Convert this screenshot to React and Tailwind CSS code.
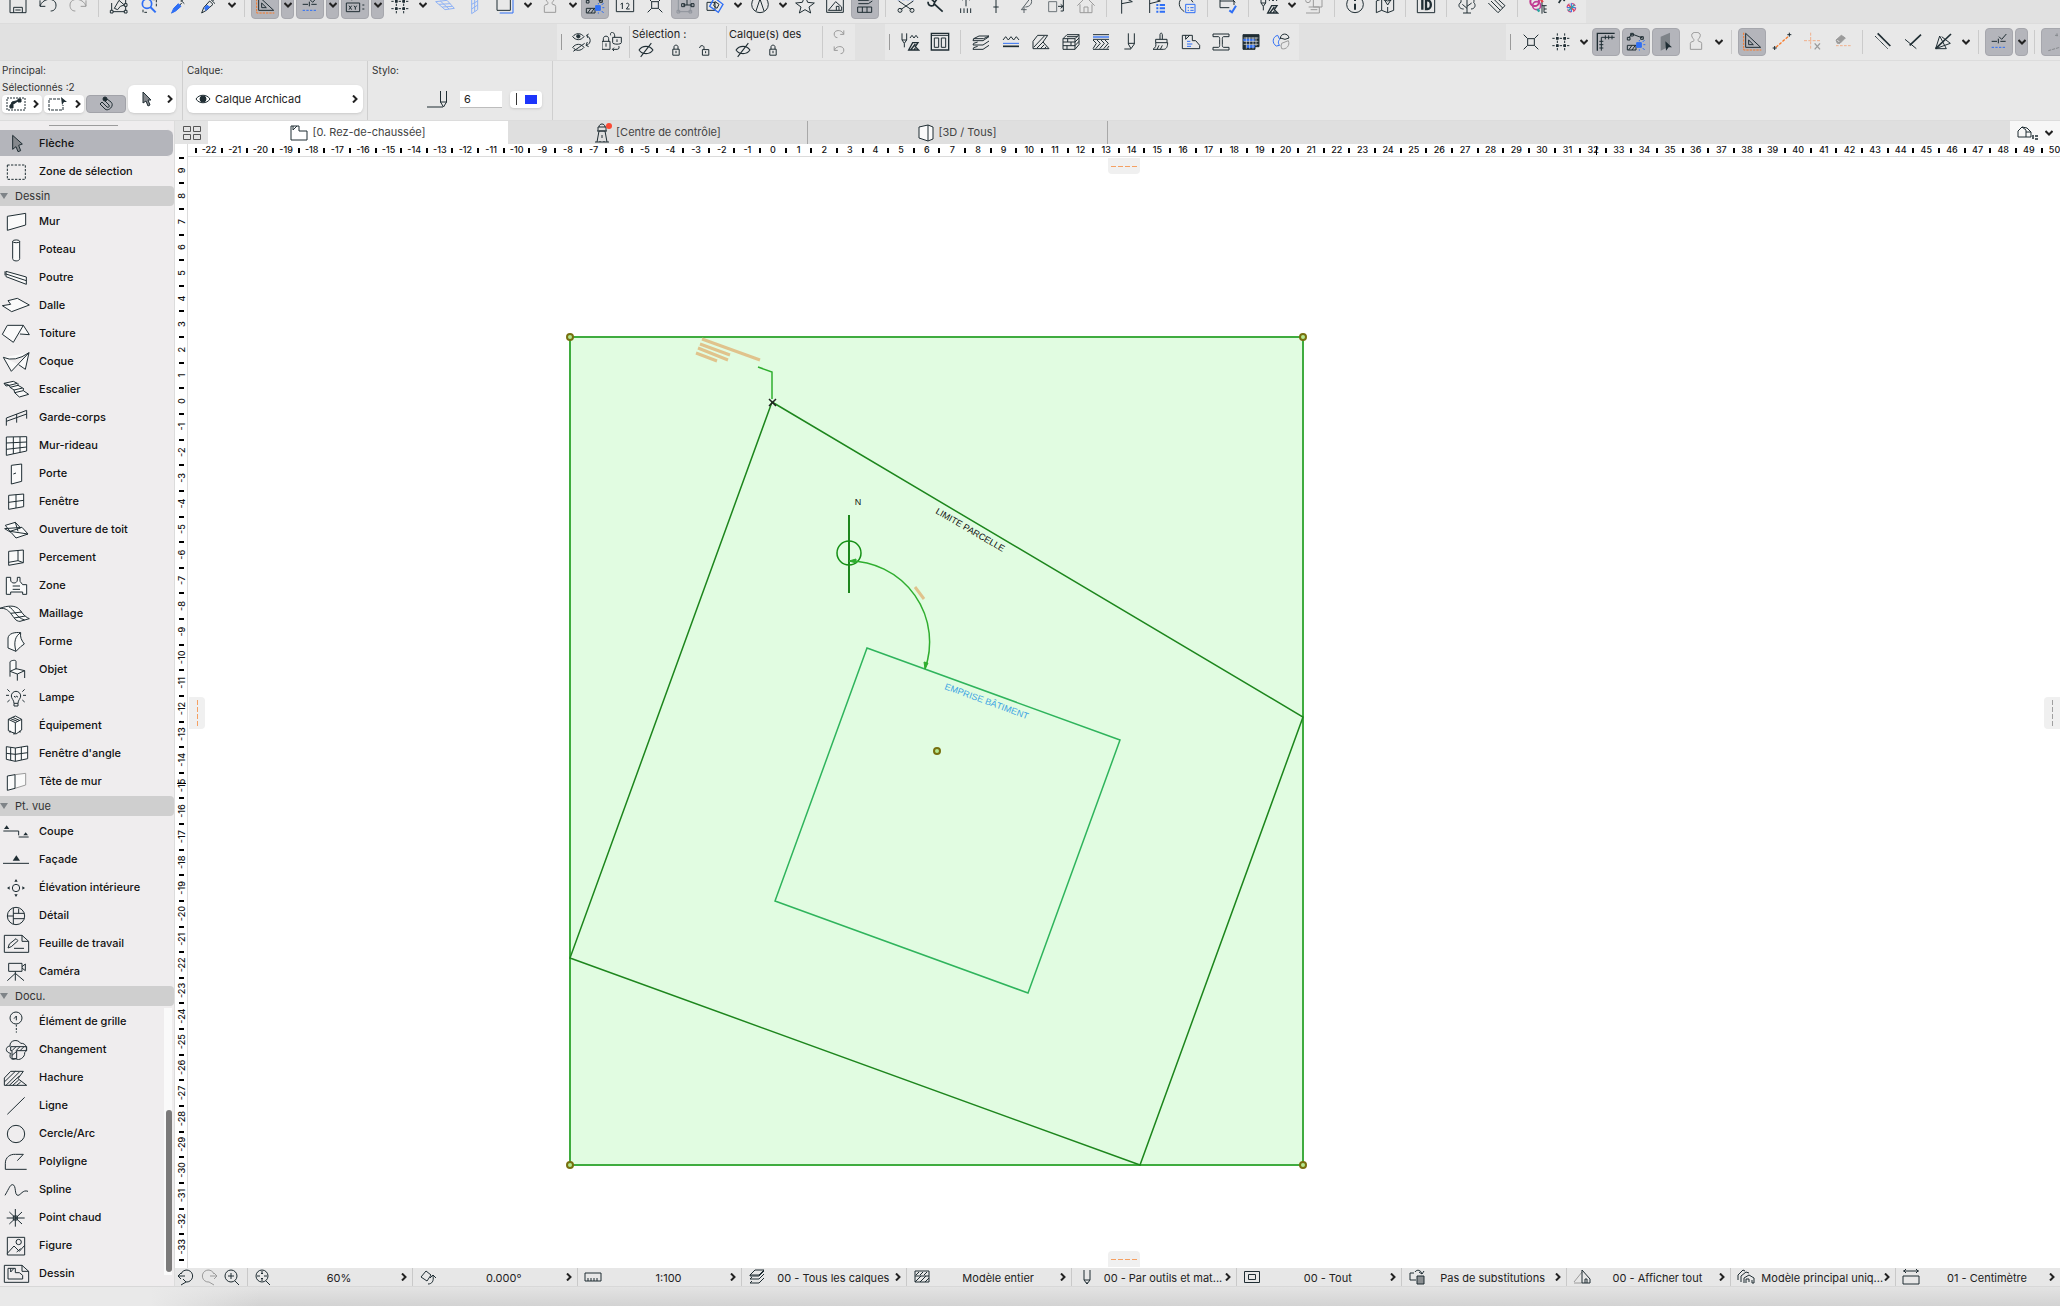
import { clsx } from 'clsx';

const INK = '#1f2d33';
const BLUE = '#2f6ff5';
const ORANGE = '#fb7a28';
const GREY = '#9b9b9b';

// Toolbar icons, drawn on a 60 x 60 grid
const icons = {
  save: <path d="M6 6H46L54 14V53H6ZM17 53V37H43V53M22 45H38" />,
  undo: <path d="M6 16V34H22M6 33C16 6 54 8 54 30C54 42 48 48 38 48" />,
  redo: <path d="M54 16V34H38M54 33C44 6 6 8 6 30C6 42 12 48 22 48" stroke={GREY} />,
  editSel: (
    <>
      <path d="M8 24V50H50V14" />
      <path d="M16 40L30 16L46 30L34 34L26 44Z" />
      <path d="M4 46h8v8h-8zM46 46h8v8h-8zM46 26h8v8h-8z" fill="#e8e8e8" />
    </>
  ),
  findSel: (
    <>
      <circle cx="24" cy="26" r="14" stroke={BLUE} strokeWidth="5" />
      <path d="M34 36L50 52" stroke={BLUE} strokeWidth="6" />
      <path d="M40 14H52V34M12 44V52H24" strokeDasharray="8 4" />
    </>
  ),
  pipette: (
    <>
      <path d="M36 20L52 4M34 14L46 26M38 24L18 46L8 54" />
      <path d="M8 54L14 40L28 26L36 34L20 48Z" fill={BLUE} stroke={BLUE} />
    </>
  ),
  syringe: (
    <>
      <path d="M34 12L48 26M41 18L54 4M32 18L42 28L22 46L8 54L14 38Z" />
      <path d="M17 38L24 31L32 36L20 46Z" fill={BLUE} stroke={BLUE} />
    </>
  ),
  guide: (
    <>
      <path d="M5 2V54H58" stroke={ORANGE} strokeDasharray="7 3" />
      <path d="M11 4V46H56ZM20 24V38H34Z" />
    </>
  ),
  snapGuide: (
    <>
      <path d="M8 28H24M34 28H50M28 20V34M30 14L38 22L52 6" />
      <path d="M8 46H52" stroke={BLUE} strokeDasharray="7 4" />
    </>
  ),
  coords: (
    <>
      <path d="M4 24H44V50H4ZM8 12L14 6L20 16M52 30H58M52 42H58" />
      <path d="M12 32L20 44M20 32L12 44M27 32L31 38L35 32M31 38V44" strokeWidth="3" />
    </>
  ),
  grid: (
    <>
      <path d="M19 4V56M41 4V56M4 19H56M4 41H56" strokeDasharray="7 4" />
      <path d="M15 15h8v8h-8zM37 15h8v8h-8zM15 37h8v8h-8zM37 37h8v8h-8z" fill={INK} stroke="none" />
    </>
  ),
  plane: (
    <path d="M2 20L36 16L58 40L30 44ZM12 28L46 26M22 36L52 34M16 18L42 42" stroke="#8fb2f5" strokeWidth="3" />
  ),
  vplane: <path d="M20 14L38 4V44L20 56ZM29 10V50M20 28L38 18M20 42L38 30" stroke="#8fb2f5" strokeWidth="3" />,
  copies: (
    <>
      <path d="M14 54H54V14" stroke={BLUE} />
      <path d="M6 4H46V46H6Z" />
    </>
  ),
  stamp: (
    <path d="M13 52V34C13 28 22 30 24 26C26 22 17 18 17 10C17 4 22 1 30 1S43 4 43 10C43 18 34 22 36 26C38 30 47 28 47 34V52Z" stroke={GREY} />
  ),
  nodes: (
    <>
      <path d="M8 18L18 6L50 18M14 4h8v8h-8zM4 16h8v8h-8zM44 14h8v8h-8z" />
      <path d="M4 40H30V54H4ZM8 54L18 40M18 54L28 40" strokeWidth="3" />
      <path d="M32 32H46V46H32Z" fill={BLUE} stroke={BLUE} />
      <path d="M50 30L56 24M52 38H58M50 48L56 54M40 52V56M40 28V24" stroke={BLUE} strokeWidth="3" />
    </>
  ),
  ruler12: (
    <>
      <path d="M4 4V50H56V4M14 4V12M24 4V12M34 4V12M44 4V12" />
      <path d="M17 28L22 24V42M34 26C40 22 44 28 40 34L34 42H44" />
    </>
  ),
  hotspot: <path d="M20 20H40V40H20ZM20 20L8 8M40 20L52 8M20 40L8 52M40 40L52 52" />,
  suspend: (
    <>
      <path d="M10 8H46V50H10Z" stroke="#8f949c" />
      <path d="M6 46h8v8h-8zM42 46h8v8h-8z" stroke="#8f949c" />
      <path d="M24 30H52M20 26h9v9h-9zM48 26h9v9h-9zM36 10V30" />
    </>
  ),
  morph: (
    <>
      <path d="M6 22H30V46H6Z" />
      <path d="M28 8L54 28L40 52L14 34Z" stroke={BLUE} strokeWidth="4" />
      <path d="M30 20L42 28L36 40L26 32Z" />
    </>
  ),
  compass: (
    <>
      <circle cx="30" cy="28" r="25" />
      <path d="M18 48L30 12L42 48" />
    </>
  ),
  star: <path d="M30 2L38 22L58 24L42 36L47 54L30 44L13 54L18 36L2 24L22 22Z" />,
  drawing: (
    <>
      <path d="M5 4H55V52H5Z" />
      <path d="M10 46L32 20L50 36V46ZM34 46V34H42V46" />
    </>
  ),
  layersFill: (
    <>
      <path d="M10 16L20 10H50L40 16ZM10 26H40L52 18" />
      <path d="M8 36H50V52H8ZM22 36V52M36 36V52" />
    </>
  ),
  cut: (
    <>
      <path d="M4 14H56" stroke={BLUE} strokeDasharray="8 6" />
      <path d="M8 18L46 44M52 18L14 44" />
      <circle cx="12" cy="46" r="6" />
      <circle cx="48" cy="46" r="6" />
    </>
  ),
  tool: <path d="M6 20C6 34 20 36 26 28L50 50M14 10L26 22L36 8M26 22L22 32" strokeWidth="5" />,
  upBars: <path d="M30 34V6M20 16L30 6L40 16M14 40V54M24 40V54M34 40V54M44 40V54" />,
  vline: <path d="M22 36H38M30 4V54" />,
  feather: <path d="M24 54V34L44 8C52 24 42 36 28 36M24 34L16 44H32" stroke="#5a6368" />,
  export: (
    <>
      <path d="M8 20H32V50H8Z" stroke="#6b7378" />
      <path d="M24 8H52V48H44M36 34H50M44 28L51 34L44 40" />
    </>
  ),
  home: <path d="M4 32L30 6L56 32M12 28V53H48V28M24 53V36H36V53" stroke={GREY} />,
  flag: <path d="M14 56V4L46 20L14 26" />,
  flagList: (
    <>
      <path d="M8 54V6L40 18L8 26" />
      <path d="M28 30H34M38 30H54M28 40H34M38 40H54M28 50H34M38 50H54" stroke={BLUE} strokeWidth="6" />
    </>
  ),
  issue: (
    <>
      <path d="M22 50C4 38 2 20 16 8H38L48 22" />
      <path d="M26 28H54V53H26ZM32 38H36M40 38H50M32 46H36M40 46H50" stroke={BLUE} />
    </>
  ),
  check: (
    <>
      <path d="M6 8V38H34M6 18H48V30M40 10L52 22" />
      <path d="M34 46L42 52L54 32" stroke={BLUE} strokeWidth="6" />
    </>
  ),
  penSet: (
    <>
      <path d="M6 4V24L13 34L20 24V4M6 24H20M13 34V46" />
      <path d="M30 18L36 10L42 18L48 10L54 18" strokeWidth="3" />
      <path d="M26 54L38 32H54L46 44L56 54ZM32 54L46 36M42 54L46 48" strokeWidth="4" />
    </>
  ),
  docs: (
    <>
      <circle cx="12" cy="16" r="7" stroke={GREY} />
      <path d="M28 8H54V36H28ZM14 36H46V54H6M20 44H40" stroke={GREY} />
    </>
  ),
  info: (
    <>
      <circle cx="30" cy="28" r="25" />
      <path d="M30 26V44M30 14V18" strokeWidth="6" />
    </>
  ),
  map: <path d="M4 18L20 12L38 18L56 12V46L38 53L20 46L4 53ZM20 12V46M38 36V53M38 30L28 14A10 10 0 0 1 48 14Z" fill="#e8e8e8" />,
  id: (
    <>
      <path d="M4 4H56V53H4Z" />
      <path d="M19 14V44M30 16V42H34C48 42 48 16 34 16Z" strokeWidth="7" />
    </>
  ),
  tree: <path d="M30 54V14M18 54H42M30 40L16 28M30 34L44 24M20 42C4 42 2 26 12 22C10 8 26 2 32 8C46 2 54 14 50 22C58 30 54 42 42 42" />,
  hatchBlock: <path d="M4 24L32 52M12 18L40 46M20 12L48 40M28 8L54 32M54 32L32 54" />,
  swirl: (
    <>
      <circle cx="20" cy="20" r="13" stroke="#c2378e" strokeWidth="6" />
      <circle cx="26" cy="32" r="12" stroke="#c0409a" strokeWidth="5" />
      <path d="M34 4L44 22" stroke="#e3454d" strokeWidth="7" />
      <path d="M28 42L34 50" stroke="#2ba6a0" strokeWidth="7" />
      <path d="M42 22V56M42 32H56M48 32V52H56M48 42H56" />
    </>
  ),
  orb: (
    <>
      <path d="M2 24L14 6M10 4L20 18" strokeWidth="5" />
      <circle cx="40" cy="38" r="13" stroke="#c94b8b" strokeWidth="4" strokeDasharray="14 6" />
      <path d="M40 25V51M27 38H53" stroke="#3f7de0" strokeWidth="4" />
      <path d="M31 29L49 47" stroke="#e3454d" strokeWidth="4" />
      <path d="M49 29L31 47" stroke="#2ba6a0" strokeWidth="4" />
    </>
  ),
  eyeSwap: (
    <>
      <path d="M2 14C12 2 26 2 36 14C26 26 12 26 2 14ZM2 46C12 34 26 34 36 46C26 58 12 58 2 46ZM4 58L38 34" />
      <circle cx="19" cy="13" r="5" fill={INK} />
      <path d="M44 10C58 18 58 34 44 40M42 40L50 44M42 40L46 30M44 10L50 6M44 10L48 18" />
    </>
  ),
  lockSwap: (
    <>
      <path d="M0 28H24V52H0ZM4 28V20C4 10 20 10 20 20V28M12 34V44M32 16H58V32C58 38 32 38 32 32ZM45 22V30M38 16C40-4 22-2 26 10" />
      <path d="M32 52H46C52 52 52 44 50 42M36 47L31 52L36 57" />
    </>
  ),
  panels: (
    <>
      <path d="M4 4H56V54H4Z" strokeWidth="4" />
      <path d="M4 10H56M13 18H26V46H13ZM34 18H47V46H34Z" />
    </>
  ),
  layers: (
    <path d="M8 20L24 12H54L38 20ZM8 20L6 26H36L54 14M8 34L6 39H36L54 27M8 34L20 30M8 47L6 52H36L54 40M8 47L20 43" />
  ),
  lineTypes: (
    <>
      <path d="M6 24L14 14L22 24L30 14L38 24L46 14L54 24" />
      <path d="M6 34H54" stroke={BLUE} />
      <path d="M6 43H54" strokeWidth="5" />
    </>
  ),
  hatch: <path d="M6 50V28L20 10H50L36 30L54 50ZM8 46L40 12M18 48L38 28M28 50L40 38M40 50L46 44" />,
  brick: (
    <path d="M6 20L18 8H54V38L42 52H6ZM6 20H42V52M42 20L54 8M6 30H42M6 41H42M20 20V30M30 30V41M18 41V52M42 30L54 18M42 41L54 28M18 14H50" />
  ),
  composite: (
    <>
      <path d="M6 8H54M6 22H54M6 52H54" />
      <path d="M6 15H54" stroke={BLUE} strokeWidth="4" />
      <path d="M6 24L16 34L6 50M18 24L28 34L14 50M30 24L40 34L26 50M42 24L52 34L38 50M54 42L48 50" />
    </>
  ),
  pen: <path d="M22 4V36L30 50L40 36V4M22 34H40M10 51H30" />,
  brush: <path d="M27 22V8C27 2 34 2 34 8V22M14 32V22H48V32M14 32H50C50 44 46 52 38 52H6C14 46 16 42 14 32ZM18 52L24 40M28 52L34 40" />,
  zoneCat: (
    <>
      <path d="M4 10H34V26H44L56 40V50H4ZM14 10V22L26 10" />
      <path d="M18 28H28M18 36H34M18 43H30" stroke={BLUE} />
    </>
  ),
  beam: <path d="M6 6H54V14H38C34 14 34 18 34 22V38C34 42 34 46 38 46H54V54H6V46H22C26 46 26 42 26 38V22C26 18 26 14 22 14H6Z" />,
  schedule: (
    <>
      <path d="M6 8H54V44H42V52H6Z" fill={INK} />
      <path d="M8 22H40V26H8ZM18 40H40V46H18Z" fill={BLUE} stroke={BLUE} />
      <path d="M16 16V50M26 16V50M36 16V50M45 16V42M8 18H52M8 28H52M8 37H52" stroke="#e8e8e8" strokeWidth="2" />
    </>
  ),
  fan: (
    <>
      <path d="M20 10C4 14 2 34 16 42L26 40C20 34 22 26 26 22Z" stroke={BLUE} />
      <path d="M28 20C28 2 52 2 54 18L42 22L28 18Z" />
      <path d="M32 34L52 26C58 40 46 54 32 50L30 42Z" stroke={GREY} />
    </>
  ),
  rulers: (
    <>
      <path d="M4 56V4H56" strokeWidth="4" />
      <path d="M16 56V16H56M28 22V10M38 22V10M48 22V10M10 28H22M10 38H22M10 48H22" />
    </>
  ),
  cursorPlane: (
    <>
      <path d="M14 14L42 2V42L14 56Z" fill="#7e8388" stroke="none" />
      <path d="M28 28L48 46H38L30 56Z" fill={INK} stroke="none" />
    </>
  ),
  guideLine: (
    <>
      <path d="M12 46L48 14" stroke={ORANGE} strokeWidth="4" strokeDasharray="9 4" />
      <path d="M2 48H14M8 42V54M46 8H58M52 2V14" />
    </>
  ),
  guideDel: (
    <>
      <path d="M26 2V54M6 26H54" stroke="#f0b08c" strokeDasharray="9 4" />
      <path d="M38 34L54 52M54 34L38 52" stroke={GREY} strokeWidth="4" />
    </>
  ),
  eraser: (
    <>
      <path d="M12 24L28 10L40 18L24 34H16Z" fill={GREY} stroke={GREY} />
      <path d="M16 24L22 30" stroke="#e8e8e8" />
      <path d="M12 41H56" stroke="#f0b08c" strokeDasharray="8 4" />
    </>
  ),
  parallel: (
    <>
      <path d="M14 4L52 42" strokeWidth="5" />
      <path d="M6 12L44 50" strokeDasharray="4 1" />
    </>
  ),
  perp: (
    <>
      <path d="M20 40L54 8" strokeWidth="5" />
      <path d="M6 22L40 50" />
    </>
  ),
  bisect: (
    <>
      <path d="M8 50L54 6" strokeWidth="5" />
      <path d="M8 50L20 12L40 50ZM8 50L52 34L26 14" />
    </>
  ),
  angle: (
    <path d="M10 56L58 42M36 4V16M30 10H42M46 14L54 40" stroke="#85888c" strokeDasharray="9 3" />
  ),
  eyeOff: <path d="M4 30C16 12 44 12 56 30C44 48 16 48 4 30ZM10 56L50 4" strokeWidth="4" />,
  lock: <path d="M14 26H46V56H14ZM20 26V14C20 3 40 3 40 14V26M30 34V46" strokeWidth="5" />,
  unlock: <path d="M22 28H54V56H22ZM30 28V16C28 4 8 6 8 20M38 36V46" strokeWidth="5" />,
  redoSmall: <path d="M54 12V32H36M53 31C44 6 6 8 6 30C6 42 12 48 22 48" stroke={GREY} strokeWidth="5" />,
};

function Icon({ name, className = 'h-5 w-5' }) {
  return (
    <svg viewBox="0 0 60 60" className={clsx('shrink-0', className)} fill="none" stroke={INK} strokeWidth="3">
      {icons[name]}
    </svg>
  );
}

function Chevron({ down = false }) {
  return (
    <svg viewBox="0 0 8 8" className="h-2 w-2 shrink-0" fill="none" stroke="#222" strokeWidth="2">
      <path d={down ? 'M0.500 2L4 5.500L7.500 2' : 'M2 0.500L5.500 4L2 7.500'} />
    </svg>
  );
}

// "|" separator, "v" menu arrow, "V" pressed menu arrow, "*name" pressed button
function ToolItem({ item }) {
  if (item === '|') {
    return (
      <div className="flex h-7 w-[9px] shrink-0 justify-center">
        <div className="h-6 w-px self-center bg-[#cbcbcb]" />
      </div>
    );
  }
  if (item === 'v' || item === 'V') {
    return (
      <button
        aria-label="Options"
        className={clsx(
          'flex h-7 w-[13px] shrink-0 items-center justify-center rounded-sm',
          item === 'V' && 'bg-[#b4b5bb] border border-[#a6a7ad]'
        )}
      >
        <Chevron down />
      </button>
    );
  }
  const pressed = item.startsWith('*');
  const name = pressed ? item.slice(1) : item;
  return (
    <button
      aria-label={name}
      className={clsx(
        'flex h-7 w-7 shrink-0 items-center justify-center rounded',
        pressed && 'bg-[#b4b5bb] border border-[#a6a7ad]'
      )}
    >
      <Icon name={name} />
    </button>
  );
}

function Handle() {
  return (
    <div className="flex h-7 w-[9px] shrink-0 justify-center">
      <div className="h-4 w-px self-center bg-[#9a9a9a]" />
    </div>
  );
}

const mainTools = [
  'save', 'undo', 'redo', '|', 'editSel', 'findSel', 'pipette', 'syringe', 'v', '|',
  '*guide', 'V', '*snapGuide', 'V', '*coords', 'V', 'grid', 'v', 'plane', 'vplane', 'copies', 'v', 'stamp', 'v',
  '*nodes', 'ruler12', 'hotspot', '*suspend', 'morph', 'v', 'compass', 'v', 'star', 'drawing', '*layersFill', '|',
  'cut', 'tool', 'upBars', 'vline', 'feather', 'export', 'home', '|', 'flag', 'flagList', 'issue', '|', 'check', '|',
  'penSet', 'v', 'docs', '|', 'info', 'map', '|', 'id', '|', 'tree', 'hatchBlock', '|', 'swirl', 'orb',
];

const attributeTools = [
  'penSet', 'panels', '|', 'layers', 'lineTypes', 'hatch', 'brick', 'composite', 'pen', 'brush', 'zoneCat', 'beam',
  'schedule', 'fan',
];

const drawingTools = [
  'hotspot', 'grid', 'v', '*rulers', '*nodes', '*cursorPlane', 'stamp', 'v', '|', '*guide', 'guideLine', 'guideDel',
  'eraser', '|', 'parallel', 'perp', 'bisect', 'v', '|', '*snapGuide', 'V', '|', '*angle',
];

function Toolbars() {
  return (
    <div className="shrink-0 bg-[#e1e1e1]">
      <div className="flex h-6 items-end overflow-hidden border-b border-[#dcdcdc]">
        <div className="flex shrink-0 gap-0.5 bg-[#e8e8e8] pb-1 pl-1 pr-1">
          {mainTools.map((item, i) => <ToolItem key={i} item={item} />)}
        </div>
      </div>
      <div className="flex h-9 overflow-hidden pl-[557px]">
        <div className="flex w-[298px] shrink-0 items-center gap-0.5 bg-[#e8e8e8]">
          <Handle />
          <ToolItem item="eyeSwap" />
          <ToolItem item="lockSwap" />
          <div className="ml-px h-8 w-px bg-[#cbcbcb]" />
          <div className="w-[92px] text-[11px] leading-4">
            <div className="whitespace-nowrap">Sélection :</div>
            <div className="flex gap-4 pl-1.5">
              <button aria-label="Masquer la sélection"><Icon name="eyeOff" className="h-4 w-4" /></button>
              <button aria-label="Verrouiller la sélection"><Icon name="lock" className="h-3 w-3" /></button>
              <button aria-label="Déverrouiller la sélection"><Icon name="unlock" className="h-3 w-3" /></button>
            </div>
          </div>
          <div className="h-8 w-px bg-[#cbcbcb]" />
          <div className="w-[91px] text-[11px] leading-4">
            <div className="whitespace-nowrap">Calque(s) des</div>
            <div className="flex gap-4 pl-1.5">
              <button aria-label="Masquer les calques"><Icon name="eyeOff" className="h-4 w-4" /></button>
              <button aria-label="Verrouiller les calques"><Icon name="lock" className="h-3 w-3" /></button>
            </div>
          </div>
          <div className="h-8 w-px bg-[#cbcbcb]" />
          <div className="flex flex-col gap-1 pl-2">
            <button aria-label="Rétablir les calques"><Icon name="redoSmall" className="h-3 w-3" /></button>
            <button aria-label="Annuler les calques" className="-scale-x-100"><Icon name="redoSmall" className="h-3 w-3" /></button>
          </div>
        </div>
        <div className="ml-[30px] flex shrink-0 items-center gap-0.5 bg-[#e8e8e8] pr-1">
          <Handle />
          {attributeTools.map((item, i) => <ToolItem key={i} item={item} />)}
        </div>
        <div className="ml-[207px] flex flex-1 items-center gap-0.5 bg-[#e8e8e8]">
          <Handle />
          {drawingTools.map((item, i) => <ToolItem key={i} item={item} />)}
        </div>
      </div>
    </div>
  );
}

function InfoBox() {
  return (
    <div className="flex h-[61px] shrink-0 border-y border-[#dcdcdc] bg-[#e8e8e8] text-[10px] leading-4 text-[#333]">
      <div className="w-[183px] shrink-0 border-r border-[#cfcfcf] pl-0.5 pt-px">
        <div>Principal:</div>
        <div className="flex items-end gap-0.5 pt-px">
          <div>
            <div>Sélectionnés :2</div>
            <div className="flex gap-0.5">
              <button aria-label="Sélection groupée" className="flex h-[18px] w-10 items-center justify-end gap-1.5 rounded bg-white pr-0.5 shadow-sm">
                <svg viewBox="0 0 20 14" className="h-3.5 w-5" fill="none" stroke={INK}>
                  <path d="M1 1H19V13H1Z" strokeDasharray="2 1" />
                  <path d="M4 10L6 5L14 3M4 8h3v3h-3zM12 2h3v3h-3z" fill={INK} />
                </svg>
                <Chevron />
              </button>
              <button aria-label="Mode de sélection" className="flex h-[18px] w-10 items-center justify-end gap-1.5 rounded bg-white pr-0.5 shadow-sm">
                <svg viewBox="0 0 20 14" className="h-3.5 w-5" fill="none" stroke={INK}>
                  <path d="M12 2H1V13H15V8" strokeDasharray="3 1" />
                  <path d="M13 0L19 5H16L14 8Z" fill={INK} stroke="none" />
                </svg>
                <Chevron />
              </button>
              <button aria-label="Magnétisme" className="flex h-[18px] w-10 items-center justify-center rounded border border-[#a2a3a9] bg-[#b4b5bb]">
                <svg viewBox="0 0 16 16" className="h-4 w-4" fill="none" stroke={INK}>
                  <path d="M2 8L7 13C10 16 17 10 13 6L9 3L7 5L11 9C12 11 10 12 9 11L4 6Z" />
                  <circle cx="7" cy="3" r="2" fill={INK} />
                </svg>
              </button>
            </div>
          </div>
          <button aria-label="Outil Flèche" className="flex h-7 w-12 items-center justify-end gap-3.5 rounded-md bg-white pr-0.5 shadow-sm">
            <ArrowIcon />
            <Chevron />
          </button>
        </div>
      </div>
      <div className="w-[185px] shrink-0 border-r border-[#cfcfcf] px-1 pt-px">
        <div>Calque:</div>
        <button className="mt-[7px] flex h-7 w-full items-center rounded-md bg-white pl-2 pr-1 text-[11px] text-[#222] shadow-sm">
          <svg viewBox="0 0 16 10" className="mr-1 h-2.5 w-4" fill="none" stroke={INK}>
            <path d="M1 5C4 0 12 0 15 5C12 10 4 10 1 5Z" />
            <circle cx="8" cy="5" r="3" fill={INK} />
          </svg>
          <span className="flex-1 text-left">Calque Archicad</span>
          <Chevron />
        </button>
      </div>
      <div className="w-[185px] shrink-0 border-r border-[#cfcfcf] pl-1 pt-px">
        <label htmlFor="pen" className="block">Stylo:</label>
        <div className="mt-[7px] flex h-7 items-center pl-[54px]">
          <svg viewBox="0 0 22 18" className="h-[18px] w-[22px]" fill="none" stroke={INK}>
            <path d="M14.500 1V12L17.500 17L20.500 12V1M14 12H21M1 17H17" />
          </svg>
          <input id="pen" defaultValue="6" className="ml-3 h-[17px] w-[42px] border-b border-[#bdbdbd] bg-white px-1 text-[11px] text-[#222] outline-none" />
          <button aria-label="Couleur du stylo" className="ml-2 flex h-[17px] w-8 items-center justify-center gap-2 rounded bg-white shadow-sm">
            <span className="h-3 w-px bg-[#333]" />
            <span className="h-[9px] w-3 bg-[#1c35fb]" />
          </button>
        </div>
      </div>
    </div>
  );
}

function ArrowIcon() {
  return (
    <svg viewBox="0 0 10 16" className="h-4 w-2.5" fill="#85888d" stroke={INK}>
      <path d="M1 1L9 9H6L8 14L6 15L4 10L1 12Z" />
    </svg>
  );
}

// Toolbox icons, drawn on a 90 x 72 grid around y = 0
const toolboxIcons = {
  arrow: <path d="M38-26L67 0L56 4L62 20L54 23L48 8L38 16Z" fill="#85888d" />,
  marquee: <path d="M22-21H76V22H22Z" strokeDasharray="7 4" />,
  wall: <path d="M22-17L77-26V9L22 25Z" fill="#fafafa" />,
  column: <path d="M38-26V26C38 35 59 35 59 26V-26M38-26A10 4 0 0 0 59-26A10 4 0 0 0 38-26Z" fill="#fafafa" />,
  beam: <path d="M18-20L79-3V19L18-4ZM15-20V-8M18-12L79 8" fill="#fafafa" />,
  slab: <path d="M7-1L32-5L24-16L52-23L88-3L35 17Z" fill="#fafafa" />,
  roof: <path d="M7 1L22-26H70L40 25ZM70-26L88 2L60 0" fill="#fafafa" />,
  shell: <path d="M10-14Q44 2 87-28L76 22L56 8M10-14L34 28L87-28" fill="#fafafa" />,
  stair: <path d="M12-20L40-26L52-20L28-14ZM28-14L30-8L54-14V-20M30-8L42 0L68-6L54-14M42 0L44 8L70 2V-6M44 8L58 21L86 13L70 2M12-20L18-12L28-14" fill="#fafafa" />,
  railing: <path d="M19 23V0L80-23V2M19 10L80-12M50-12V14" />,
  curtain: <path d="M19-27L80-28V15L19 28ZM40-27V24M60-27V20M19-9L80-12M19 10L80 3" fill="#fafafa" />,
  door: <path d="M34-26L65-30V22L34 30ZM40 0L48-3" fill="#fafafa" />,
  window: <path d="M26-20L71-24V14L26 22ZM48-22V18M26 1L71-5" fill="#fafafa" />,
  skylight: <path d="M16-14L46-23L62-6L30 4ZM14-4L66-8L84 12L48 24L34 8ZM30 4L84 12M46-23L54 4" fill="#fafafa" />,
  opening: <path d="M26-20L70-24V14L26 22ZM54-22V8L26 13M54 8L70 14" fill="#fafafa" />,
  zone: <path d="M19-26H32V-18C32-6 52-6 52-18V-26H60V-14L68-4H80V25H68V18H32V25H19ZM38 0H60M38 10H60" fill="#fafafa" />,
  mesh: <path d="M0-17C24-26 44-26 56-16C66-6 70 6 88 14L60 22C46 22 42 10 32-2C24-12 16-18 0-17M32-2L66-6M42 12L76 6M26-22C44-14 46 10 74 18" fill="#fafafa" />,
  morph: <path d="M24 18V-12C26-26 44-30 62-28C60-14 64-6 73 6L62 14L48 28ZM48 28C40 0 46-18 62-28" fill="#fafafa" />,
  chair: <path d="M30 20V-24C30-28 48-32 48-26V-2M30 4L48-4L74 2L52 12ZM52 12V32M74 2V24" fill="#fafafa" />,
  lamp: (
    <>
      <path d="M42 16C42 6 34 2 34-6A14 14 0 0 1 62-6C62 2 54 6 54 16ZM42 16V24H54V16M42-6L46-2L50-6L54-2" />
      <path d="M18-8H27M69-8H78M22-26L29-19M74-26L67-19M22 12L29 6M74 12L67 6" />
    </>
  ),
  equipment: <path d="M25-20L46-30L65-20V12L48 24L25 14ZM25-20L46-10L65-20M46-10V22M32-22L52-14M38-26L58-17M30 14V20M42 19V26M60 14V20" fill="#fafafa" />,
  corner: <path d="M19-22L46-18L83-24V14L46 22L19 16ZM46-18V22M32-20V18M64-21V18M19-2L46 1L83-4" fill="#fafafa" />,
  wallEnd: (
    <>
      <path d="M45-22L77-26V9L45 19" fill="#fafafa" stroke={GREY} />
      <path d="M22-18L45-22V19L22 25Z" fill="#fafafa" />
    </>
  ),
  section: (
    <>
      <path d="M10-3H56V10M56 15H86" />
      <path d="M12-9L20-20L28-9ZM70 10L77 1L84 10Z" fill={INK} stroke="none" />
    </>
  ),
  elevation: (
    <>
      <path d="M9 10H87" />
      <path d="M38 2L49-14L60 2Z" fill={INK} stroke="none" />
    </>
  ),
  interior: (
    <>
      <circle cx="48" cy="0" r="11" />
      <path d="M43-19H53L48-27ZM43 19H53L48 27ZM29-5V5L21 0ZM67-5V5L75 0Z" fill={INK} stroke="none" />
    </>
  ),
  detail: (
    <>
      <circle cx="48" cy="0" r="26" />
      <path d="M40-24V24M40-8H73M40 8H73M22 0H40M56-8V-22" />
    </>
  ),
  worksheet: <path d="M13-26H66L86-8V25H13ZM66-26V-8H86M24 12L28 0L48-16L54-10L34 8ZM42 13H72" />,
  camera: <path d="M26-26H66V-2H26ZM66-16L76-24V-4L66-12M46-2V26M46 4L22 26M46 4L72 26" />,
  gridEl: (
    <>
      <circle cx="48" cy="-12" r="18" />
      <path d="M42-10L49-18V-5" />
      <path d="M49 8V32" strokeDasharray="6 4" />
    </>
  ),
  change: <path d="M30-12C28-30 54-34 62-20C80-22 84 0 74 8C76 22 56 34 48 26C34 32 26 22 32 10C16 8 14-10 30-12ZM32-10H80V2H50V26H36V2H32ZM36 2L48-10M48 2L60-10M60 2L72-10M36 16L50 4" />,
  fill: <path d="M13 22V0L32-20H70L54 2L80 22ZM13 12L46-20M18 22L58-18M28 22L58-6M38 22L56 6M50 22L62 12" />,
  line: <path d="M22 25L74-26" />,
  circle: <circle cx="48" cy="0" r="26" />,
  polyline: <path d="M80 22H16V4C16-14 30-24 46-23H70L52-4" />,
  spline: <path d="M15 16C28-6 30-16 38-16C50-14 42 16 54 16C62 16 68-2 84 4" />,
  hotspot: <path d="M46-27V26M20 0H74M28-18L66 18M66-18L28 18M40-6H52V6H40Z" />,
  figure: (
    <>
      <path d="M22-26H74V27H22ZM22 22L42 0L58 16L74-2M50 18L62 8" />
      <circle cx="56" cy="-12" r="8" />
    </>
  ),
  drawing: <path d="M13-26H66L86-8V25H13ZM66-26V-8H86M24-17H46V-4H58L68 4V15H24ZM32-17V-6L42-17" />,
};

const toolGroups = [
  {
    tools: [['arrow', 'Flèche'], ['marquee', 'Zone de sélection']],
  },
  {
    title: 'Dessin',
    tools: [
      ['wall', 'Mur'], ['column', 'Poteau'], ['beam', 'Poutre'], ['slab', 'Dalle'], ['roof', 'Toiture'],
      ['shell', 'Coque'], ['stair', 'Escalier'], ['railing', 'Garde-corps'], ['curtain', 'Mur-rideau'],
      ['door', 'Porte'], ['window', 'Fenêtre'], ['skylight', 'Ouverture de toit'], ['opening', 'Percement'],
      ['zone', 'Zone'], ['mesh', 'Maillage'], ['morph', 'Forme'], ['chair', 'Objet'], ['lamp', 'Lampe'],
      ['equipment', 'Équipement'], ['corner', "Fenêtre d'angle"], ['wallEnd', 'Tête de mur'],
    ],
  },
  {
    title: 'Pt. vue',
    tools: [
      ['section', 'Coupe'], ['elevation', 'Façade'], ['interior', 'Élévation intérieure'], ['detail', 'Détail'],
      ['worksheet', 'Feuille de travail'], ['camera', 'Caméra'],
    ],
  },
  {
    title: 'Docu.',
    tools: [
      ['gridEl', 'Élément de grille'], ['change', 'Changement'], ['fill', 'Hachure'], ['line', 'Ligne'],
      ['circle', 'Cercle/Arc'], ['polyline', 'Polyligne'], ['spline', 'Spline'], ['hotspot', 'Point chaud'],
      ['figure', 'Figure'], ['drawing', 'Dessin'],
    ],
  },
];

function Toolbox() {
  return (
    <aside className="relative w-[175px] shrink-0 overflow-hidden border-r border-[#dcdcdc] bg-[#efedee] text-[11px]">
      <div className="flex h-2 items-center justify-center pr-2">
        <div className="h-px w-[69px] bg-[#9c9c9c]" />
      </div>
      {toolGroups.map((group, i) => (
        <div key={i}>
          {group.title && (
            <button className="my-px flex h-5 w-full items-center rounded-r bg-[#cfcfcf] text-[#333]">
              <svg viewBox="0 0 8 6" className="h-1.5 w-2" fill="#7f8488"><path d="M0 0H8L4 6Z" /></svg>
              <span className="pl-[7px]">{group.title}</span>
            </button>
          )}
          {group.tools.map(([icon, label]) => (
            <button
              key={label}
              className={clsx(
                'flex h-7 w-[173px] items-center gap-[9px] pt-px font-medium text-[#111]',
                icon === 'arrow' && 'rounded-r-md border-y border-[#efedee] bg-[#b4b5bb]'
              )}
            >
              <svg viewBox="0 -36 90 72" className="h-6 w-[30px]" fill="none" stroke={INK} strokeWidth="3">
                {toolboxIcons[icon]}
              </svg>
              <span>{label}</span>
            </button>
          ))}
        </div>
      ))}
      <div className="absolute bottom-[11px] right-0.5 h-[267px] w-2 bg-[#fafafa]">
        <div className="absolute bottom-[3px] right-0 h-[162px] w-1.5 rounded-full bg-[#7b7a7a]" />
      </div>
    </aside>
  );
}

function TabBar() {
  return (
    <div className="flex h-[23px] shrink-0 bg-[#dfdfdf] text-[11px] text-[#444]">
      <button aria-label="Aperçu des onglets" className="flex w-[33px] items-center justify-center bg-[#e4e4e4]">
        <svg viewBox="0 0 20 16" className="h-4 w-5" fill="none" stroke="#555">
          <path d="M1.500 1.500h7v5h-7zM11.500 1.500h7v5h-7zM1.500 9.500h7v5h-7zM11.500 9.500h7v5h-7z" />
        </svg>
      </button>
      <button className="flex w-[300px] items-center justify-center gap-1 bg-white">
        <svg viewBox="0 0 18 16" className="h-4 w-[18px]" fill="none" stroke={INK}>
          <path d="M1 1H9V6H17V15H1ZM3 1V5L7 1" />
        </svg>
        [0. Rez-de-chaussée]
      </button>
      <button className="flex w-[300px] items-center justify-center gap-1 border-r border-[#a8a8a8]">
        <svg viewBox="0 0 18 20" className="h-5 w-[18px]" fill="none" stroke={INK}>
          <path d="M3 19L5 8H11L13 19M1 19H15M3 8H13M4 8V4H12V8M5 4C5 0 11 0 11 4M8 12V15M6 18V19M10 18V19" />
          <circle cx="15" cy="3" r="3" fill="#fb4a34" stroke="none" />
        </svg>
        [Centre de contrôle]
      </button>
      <button className="flex w-[300px] items-center justify-center gap-1 border-r border-[#a8a8a8]">
        <svg viewBox="0 0 16 18" className="h-[18px] w-4" fill="#fafafa" stroke={INK}>
          <path d="M1 3L10 1L15 3V15L10 17L1 14ZM10 1V17" />
        </svg>
        [3D / Tous]
      </button>
      <button aria-label="Options de vue" className="ml-auto flex w-[50px] items-center justify-center gap-1.5 bg-[#f7f7f7]">
        <svg viewBox="0 0 22 14" className="h-3.5 w-[22px]" fill="none" stroke={INK}>
          <path d="M1 11V5L5 1L9 4V11ZM5 1L10 2L14 6V11H9M14 6H9" />
          <path d="M16 9V13M18 10H21M18 13H21" strokeWidth="1.500" />
        </svg>
        <Chevron down />
      </button>
    </div>
  );
}

// One model metre on screen
const STEP = 25.63;
const range = (from, to) => Array.from({ length: to - from + 1 }, (_, i) => from + i);

function HorizontalRuler() {
  return (
    <div className="h-[13px] shrink-0 border-b border-[#dcdcdc]">
      <svg className="h-3 w-full text-[9px] font-medium" fill="#111" textAnchor="middle">
        {range(-22, 50).map((n) => (
          <g key={n}>
            <rect x={Math.round(571 + n * STEP)} y="4" width="2" height="5" fill="#000" />
            <text x={585 + n * STEP} y="9">{n}</text>
          </g>
        ))}
        <rect x="1408" y="2" width="1" height="9" fill="#000" />
      </svg>
    </div>
  );
}

function VerticalRuler() {
  return (
    <div className="w-[13px] shrink-0 overflow-hidden border-r border-[#dcdcdc]">
      <svg className="h-full w-3 text-[9px] font-medium" fill="#111" textAnchor="middle">
        {range(-33, 9).map((n) => (
          <g key={n}>
            <rect x="4" y={Math.round(269 - n * STEP)} width="5" height="2" fill="#000" />
            <text transform={`translate(10 ${257 - n * STEP}) rotate(-90)`}>{n}</text>
          </g>
        ))}
        <rect x="4" y="13" width="5" height="2" fill="#000" />
        <rect x="2" y="639" width="9" height="1" fill="#000" />
      </svg>
    </div>
  );
}

const handles = [[382, 180], [1115, 180], [382, 1008], [1115, 1008], [749, 594]];

function Plan() {
  return (
    <svg className="h-full w-full font-['Liberation_Sans',Arial,sans-serif] text-[9px]" fill="none" strokeWidth="1.500">
      <rect x="382" y="180" width="733" height="828" fill="#e1fce1" stroke="#3fac3f" strokeWidth="2" />
      <path d="M584 245L1115 560L952 1008L382 801Z" stroke="#1d861d" />
      <path d="M679 491L932 583L840 836L587 744Z" stroke="#2fb45c" />
      <g stroke="#e0c38c" strokeWidth="3">
        <path d="M514 182L572 203M512 187L542 198M510 191L540 203M508 196L529 204" />
        <path d="M727 430L736 442" />
      </g>
      <path d="M570 210L584 215V242" stroke="#2fae2f" />
      <path d="M581 242L588 249M588 242L581 249" stroke="#222" />
      <path d="M661 358V436" stroke="#1d861d" strokeWidth="2" />
      <circle cx="661" cy="396" r="12" stroke="#159015" />
      <path d="M661 404A81 81 0 0 1 737 512" stroke="#2fae2f" />
      <path d="M661 404L668 402V406ZM737 512L736 505L740 506Z" fill="#2fae2f" stroke="#2fae2f" strokeWidth="1" />
      <text x="670" y="348" textAnchor="middle" fill="#111">N</text>
      <text transform="translate(747 356) rotate(30)" fill="#111">LIMITE PARCELLE</text>
      <text transform="translate(756 532) rotate(20)" fill="#3ba3e3">EMPRISE BÂTIMENT</text>
      {handles.map(([x, y]) => (
        <circle key={`${x}-${y}`} cx={x} cy={y} r="3" stroke="#77700f" strokeWidth="2" fill="#b5e890" />
      ))}
    </svg>
  );
}

// Grips at the middle of each canvas edge
function EdgeGrip({ className, vertical = false, dash = 'bg-[#f5a062]' }) {
  return (
    <div
      className={clsx(
        'absolute flex items-center justify-center gap-0.5 bg-[#f0f0f0]',
        vertical ? 'top-1/2 h-8 w-4 -translate-y-1/2 flex-col' : 'left-1/2 h-4 w-8 -translate-x-1/2',
        className
      )}
    >
      {range(1, 4).map((n) => (
        <span key={n} className={clsx(vertical ? 'h-[5px] w-px' : 'h-px w-[5px]', dash)} />
      ))}
    </div>
  );
}

function Canvas() {
  return (
    <div className="relative min-h-0 flex-1 overflow-hidden bg-white">
      <Plan />
      <EdgeGrip className="top-px rounded-b" />
      <EdgeGrip className="bottom-px rounded-t" />
      <EdgeGrip vertical className="left-px rounded-r" />
      <EdgeGrip vertical className="right-0 rounded-l" dash="bg-[#a0a0a0]" />
    </div>
  );
}

// Status bar icons, drawn on an 18 x 18 grid
const statusItems = [
  {
    label: '60%',
    icon: (
      <>
        <circle cx="8" cy="8" r="6" />
        <path d="M12 13L16 17M8 3V6M8 10V13M3 8H6M10 8H13M7 5L8 6L9 5M7 11L8 10L9 11" />
      </>
    ),
  },
  { label: '0.000°', icon: <path d="M2 9L7 3L12 7L8 13ZM9 16C13 16 15 13 14 8M11 10L14 7L17 10" /> },
  { label: '1:100', icon: <path d="M1 5H17V13H1ZM4 13V10M7 13V10M10 13V10M13 13V10" /> },
  {
    label: '00 - Tous les calques',
    icon: <path d="M2 7L7 2H16L11 7ZM2 7V8L11 8L16 3M2 11H11L16 6M2 11L4 9M2 15H11L16 10M2 15L4 13" />,
  },
  { label: 'Modèle entier', icon: <path d="M2 3H16V14H2ZM2 8H16M2 14L8 8M7 14L13 8M12 14L16 10M3 7L6 4M7 7L10 4M11 7L14 4" /> },
  { label: '00 - Par outils et mat...', icon: <path d="M6 2V12L9 16L12 12V2M6 12H12M9 14V16" /> },
  { label: '00 - Tout', icon: <path d="M1.500 3.500H16.500V14.500H1.500ZM5.500 6.500H12.500V11.500H5.500Z" /> },
  {
    label: 'Pas de substitutions',
    icon: (
      <>
        <path d="M8 12H2V5H6M7 4C9 1 13 2 14 6M11 4L14 6L16 3" />
        <path d="M9 8H16V16H9Z" fill="#8b8f92" />
      </>
    ),
  },
  {
    label: '00 - Afficher tout',
    icon: (
      <>
        <path d="M1 14L9 4M1 15H9" stroke={GREY} />
        <path d="M9 15V2L17 11V15H9M12 15V11H14V15" />
      </>
    ),
  },
  {
    label: 'Modèle principal uniq...',
    icon: <path d="M1 12V7L6 2L8 3M4 14V8L9 4L12 5M7 15V10L12 7L17 10V15H15V12M9 15V11H12V14" />,
  },
  { label: '01 - Centimètre', icon: <path d="M1 8H17V16H1ZM1 3H17M4 1L2 3L4 5M14 1L16 3L14 5" /> },
];

function StatusBar() {
  return (
    <footer className="flex h-[18px] shrink-0 bg-[#e7e7e7] text-[11px] text-[#222]">
      <div className="flex w-[72px] shrink-0 items-center gap-[5px] pl-0.5">
        <button aria-label="Zoom précédent">
          <svg viewBox="0 0 18 18" className="h-[18px] w-[18px]" fill="none" stroke={INK}>
            <path d="M4 6A6 6 0 1 1 9 14L4 17M1 8L4 11M1 8L4 5M1 8H8M9 14L6 11" />
          </svg>
        </button>
        <button aria-label="Zoom suivant">
          <svg viewBox="0 0 18 18" className="h-[18px] w-[18px]" fill="none" stroke={GREY}>
            <path d="M14 6A6 6 0 1 0 9 14L14 17M17 8L14 11M17 8L14 5M17 8H10" />
          </svg>
        </button>
        <button aria-label="Zoom avant">
          <svg viewBox="0 0 18 18" className="h-[18px] w-[18px]" fill="none" stroke={INK}>
            <path d="M8 2A6 6 0 1 0 8 14A6 6 0 1 0 8 2M12 13L16 17M8 5V11M5 8H11" />
          </svg>
        </button>
      </div>
      {statusItems.map((item) => (
        <button key={item.label} className="flex min-w-0 flex-1 basis-0 items-center border-l border-[#c9c9c9] pl-1.5 pr-1">
          <svg viewBox="0 0 18 18" className="h-[18px] w-[18px] shrink-0" fill="none" stroke={INK}>{item.icon}</svg>
          <span className="flex-1 whitespace-nowrap pl-1.5 pt-0.5 text-center">{item.label}</span>
          <Chevron />
        </button>
      ))}
    </footer>
  );
}

function App() {
  return (
    <div className="flex h-screen w-full flex-col overflow-hidden bg-white font-['Inter','Liberation_Sans',sans-serif] text-[#222]">
      <Toolbars />
      <InfoBox />
      <div className="flex min-h-0 flex-1">
        <Toolbox />
        <div className="flex min-w-0 flex-1 flex-col">
          <TabBar />
          <div className="flex min-h-0 flex-1">
            <VerticalRuler />
            <div className="flex min-w-0 flex-1 flex-col">
              <HorizontalRuler />
              <Canvas />
            </div>
          </div>
          <StatusBar />
        </div>
      </div>
      <div className="h-5 shrink-0 border-t border-[#d8d8d8] bg-[linear-gradient(to_right,#e9e9e9_150px,transparent_260px),linear-gradient(to_bottom,#e3e3e3,#d3d3d3)]" />
    </div>
  );
}

export default App;
